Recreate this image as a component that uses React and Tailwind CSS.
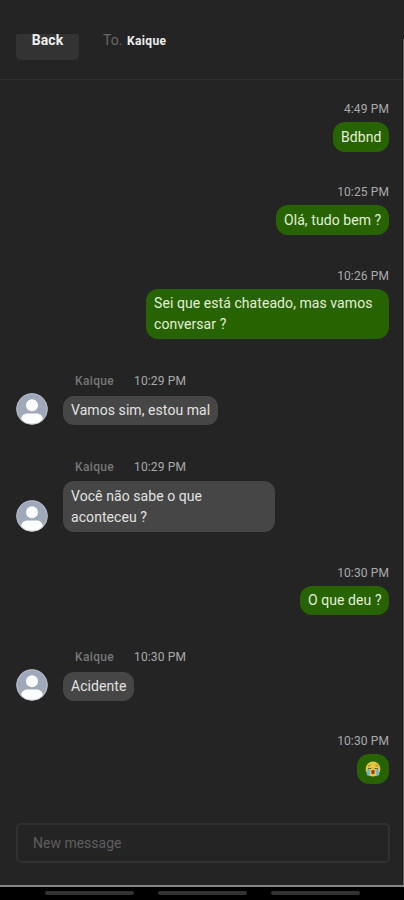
import React from 'react';

function Avatar() {
  return (
    <svg className="h-8 w-8 shrink-0" viewBox="0 0 32 32">
      <defs>
        <clipPath id="disc">
          <circle cx="16" cy="16" r="15.7" />
        </clipPath>
      </defs>
      <circle cx="16" cy="16" r="15.7" fill="#a0a9b9" />
      <g clipPath="url(#disc)" fill="#fcfdff">
        <circle cx="16" cy="12.2" r="6" />
        <path d="M5.3 28v-1.800c0-3.500 2.800-5.700 6-5.700h9.400c3.200 0 6 2.200 6 5.700V28c-3 2.400-6.500 3.200-10.700 3.200S8.300 30.400 5.300 28z" />
      </g>
      <circle cx="16" cy="16" r="15.3" fill="none" stroke="#b7bfcc" strokeWidth=".8" />
    </svg>
  );
}

function CryingFace() {
  return (
    <svg className="h-4 w-4" viewBox="0 0 16 16">
      <circle cx="8" cy="8" r="7.4" fill="#e3c744" />
      <path d="M3 5.200l2.500-1.400M13 5.200l-2.500-1.400" stroke="#8b6420" strokeWidth=".8" />
      <path d="M3 7.300q1.700 1 3.300 0M9.700 7.300q1.700 1 3.300 0" fill="none" stroke="#65471c" strokeWidth="1" />
      <path d="M2.600 8h2.400v7.200L1.600 14zM11 8h2.400l1 6-3.400 1.200z" fill="#70b9c9" />
      <ellipse cx="8" cy="11" rx="1.800" ry="2.300" fill="#a33d2c" />
    </svg>
  );
}

function Sent({ time, className, bubble, children }) {
  return (
    <div className={`flex flex-col items-end ${className}`}>
      <div className="h-4 pt-px text-[12px] leading-4 tracking-[0.12px] text-[#aaaaaa]">{time}</div>
      <div className={`mt-1.5 whitespace-nowrap rounded-[12px] bg-[#286302] pl-2 text-[14px] leading-[21px] tracking-[0.07px] text-[#e3efdc] ${bubble}`}>
        {children}
      </div>
    </div>
  );
}

function Received({ time, className, bubble, children }) {
  return (
    <div className={className}>
      <div className="flex h-4 pl-[59px] pt-px text-[12px] leading-4">
        <span className="w-[59px] font-medium tracking-[0.35px] text-[#777777]">Kaique</span>
        <span className="tracking-[0.15px] text-[#aaaaaa]">{time}</span>
      </div>
      <div className="flex items-end gap-[15px]">
        <Avatar />
        <div className={`whitespace-nowrap rounded-[11px] bg-[#464646] pl-2 text-[14px] leading-[21px] tracking-[0.07px] text-[#e2e2e2] ${bubble}`}>
          {children}
        </div>
      </div>
    </div>
  );
}

export default function App() {
  return (
    <div className="flex h-[900px] w-[404px] flex-col overflow-hidden bg-black font-['Roboto',sans-serif]">
      <div className="flex h-[887px] flex-col border-b-2 border-[#858585] bg-[#242424]">
        <div className="h-[34px] shrink-0" />
        <div className="flex min-h-0 flex-1">
          <div className="flex w-[402px] flex-col">
            <header className="flex h-[46px] shrink-0 items-start border-b border-[#303030] pl-4">
              <button className="h-[26px] w-[63px] rounded-b-[5px] rounded-t-[2px] bg-[#333333] pb-[14px] text-[14px] font-bold leading-[12px] tracking-[0.1px] text-[#eeeeee]">
                Back
              </button>
              <div className="flex pl-6 leading-[14px]">
                <span className="w-6 text-[14px] leading-[12px] text-[#696969]">To.</span>
                <span className="text-[12px] font-bold tracking-[0.35px] text-[#eeeeee]">Kaique</span>
              </div>
            </header>
            <main className="flex-1 pl-4 pr-[13px] pt-5">
              <Sent time="4:49 PM" bubble="h-[30px] w-14 pt-[5px]">Bdbnd</Sent>
              <Sent time="10:25 PM" className="mt-[31px]" bubble="h-[30px] w-[113px] pt-[5px]">Olá, tudo bem ?</Sent>
              <Sent time="10:26 PM" className="mt-8" bubble="h-[50px] w-[243px] pt-1">
                Sei que está chateado, mas vamos<br />conversar ?
              </Sent>
              <Received time="10:29 PM" className="mt-[33px]" bubble="mt-2 h-[29px] w-[155px] pt-1">Vamos sim, estou mal</Received>
              <Received time="10:29 PM" className="mt-[33px]" bubble="mt-[7px] h-[51px] w-[212px] pt-[5px]">
                Você não sabe o que<br />aconteceu ?
              </Received>
              <Sent time="10:30 PM" className="mt-8" bubble="h-[29px] w-[89px] pt-1">O que deu ?</Sent>
              <Received time="10:30 PM" className="mt-[33px]" bubble="mt-2 h-[29px] w-[71px] pt-1">Acidente</Received>
              <Sent time="10:30 PM" className="mt-[31px]" bubble="h-[30px] w-8 pt-[7px]"><CryingFace /></Sent>
            </main>
            <footer className="h-[62px] shrink-0 pl-4 pr-3">
              <input
                className="block h-10 w-full rounded-[5px] border-2 border-[#313131] bg-transparent px-[15px] text-[14px] outline-none placeholder:text-[#5e5e5e]"
                placeholder="New message"
              />
            </footer>
          </div>
          <div className="mt-[5px] w-[2px] border-l border-[#161616] bg-[#707070]" />
        </div>
      </div>
      <nav className="flex gap-6 pl-[45px] pt-1">
        <div className="h-1 w-[89px] rounded-sm bg-[#333333]" />
        <div className="h-1 w-[89px] rounded-sm bg-[#333333]" />
        <div className="h-1 w-[89px] rounded-sm bg-[#333333]" />
      </nav>
    </div>
  );
}
